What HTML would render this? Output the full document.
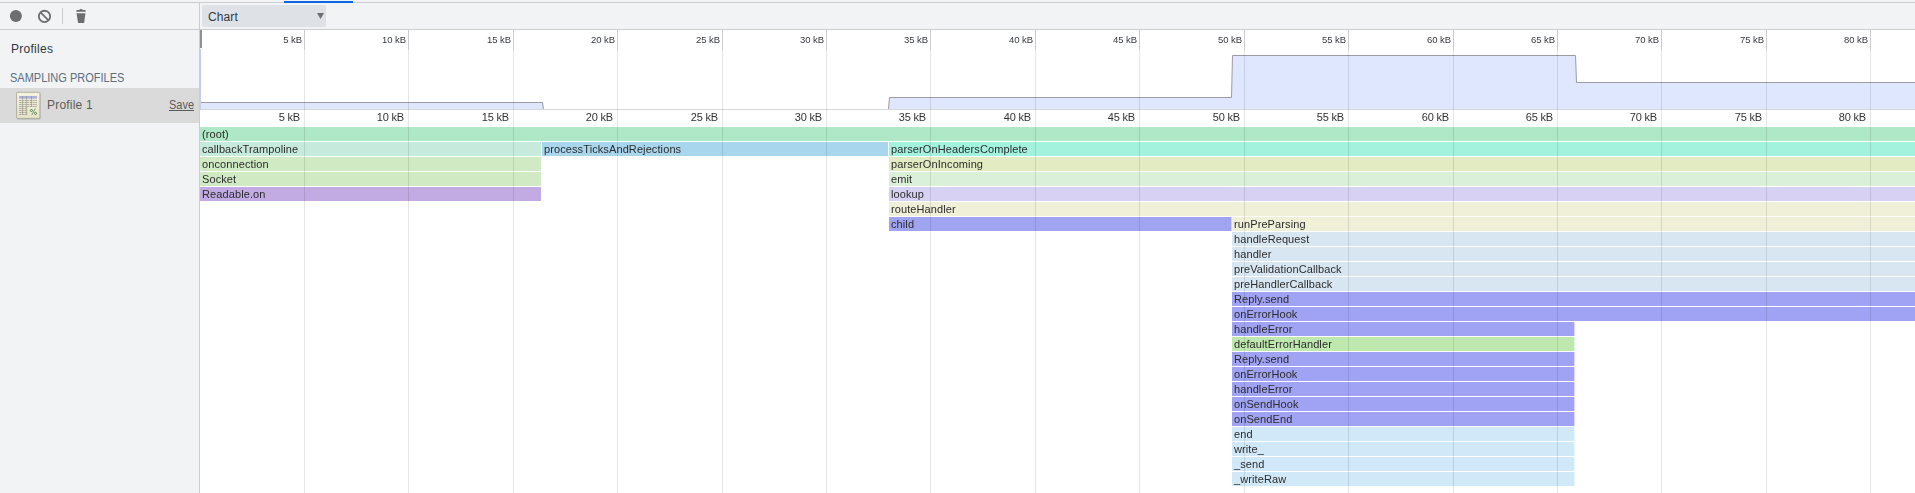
<!DOCTYPE html>
<html><head><meta charset="utf-8"><title>Profile</title>
<style>
html,body{margin:0;padding:0;}
body{width:1915px;height:493px;overflow:hidden;background:#fff;position:relative;font-family:"Liberation Sans",sans-serif;font-size:12px;color:#303942;}
div,span,svg{position:absolute;box-sizing:border-box;}
.side{left:0;top:0;width:199px;height:493px;background:#f1f3f4;}
.sideb{left:199px;top:3px;width:1px;height:490px;background:#cbcdd1;}
.top{left:0;top:0;width:1915px;height:3px;background:#f1f3f4;}
.topl{left:0;top:2px;width:1915px;height:1px;background:#cbcdd1;}
.tab{left:284px;top:1px;width:69px;height:2px;background:#0b66e4;}
.tb{left:0;top:3px;width:1915px;height:26px;background:#f1f3f4;}
.tbl{left:0;top:29px;width:1915px;height:1px;background:#cbcdd1;}
.sel{left:202px;top:5px;width:124px;height:22px;background:#dee1e6;border-radius:2px;}
.t{white-space:nowrap;line-height:14px;}
.bar{height:14px;}
.bl{will-change:transform;font-size:11px;line-height:14px;color:#2c2c2c;white-space:nowrap;top:0;left:2px;letter-spacing:0.1px;}
.g{width:1px;background:rgba(0,0,0,0.1);}
.gd{width:1px;background:rgba(0,0,10,0.2);}
.ol{will-change:transform;font-size:9.5px;line-height:12px;color:#353a40;white-space:nowrap;text-align:right;width:60px;top:34px;letter-spacing:-0.05px;}
.fl{will-change:transform;font-size:11px;line-height:14px;color:#333;white-space:nowrap;text-align:right;width:60px;top:110px;letter-spacing:-0.2px;}
</style></head><body>

<div class="chart" style="left:200px;top:30px;width:1715px;height:463px;background:#fff;"></div>
<svg style="left:200px;top:30px;" width="1715" height="80" viewBox="0 0 1715 80">
<path d="M0 72.5 H342.5 L343.5 80 H688.5 L689.5 67.5 H1031.5 L1032.5 25.5 H1375.5 L1376.5 52.5 H1715 V80 H0 Z" fill="#dee7fe"/>
<path d="M0 72.5 H342.5 L343.5 79.5 M688.5 79.5 L689.5 67.5 H1031.5 L1032.5 25.5 H1375.5 L1376.5 52.5 H1715" fill="none" stroke="#a09aa3" stroke-width="1"/>
</svg>
<div style="left:200px;top:109px;width:1715px;height:1px;background:#d4d6dc;"></div>
<div class="bar" style="left:200px;top:127px;width:1715px;background:#aee8c6;"><span class="bl">(root)</span></div>
<div class="bar" style="left:200px;top:142px;width:341px;background:#c6ebdd;"><span class="bl">callbackTrampoline</span></div>
<div class="bar" style="left:542px;top:142px;width:346px;background:#a8d6ec;"><span class="bl">processTicksAndRejections</span></div>
<div class="bar" style="left:889px;top:142px;width:1026px;background:#a2f2de;"><span class="bl">parserOnHeadersComplete</span></div>
<div class="bar" style="left:200px;top:157px;width:341px;background:#d0eac4;"><span class="bl">onconnection</span></div>
<div class="bar" style="left:889px;top:157px;width:1026px;background:#e3ebc2;"><span class="bl">parserOnIncoming</span></div>
<div class="bar" style="left:200px;top:172px;width:341px;background:#d0eac4;"><span class="bl">Socket</span></div>
<div class="bar" style="left:889px;top:172px;width:1026px;background:#dbf0d8;"><span class="bl">emit</span></div>
<div class="bar" style="left:200px;top:187px;width:341px;background:#c2abe3;"><span class="bl">Readable.on</span></div>
<div class="bar" style="left:889px;top:187px;width:1026px;background:#d7d2f3;"><span class="bl">lookup</span></div>
<div class="bar" style="left:889px;top:202px;width:1026px;background:#f0efd8;"><span class="bl">routeHandler</span></div>
<div class="bar" style="left:889px;top:217px;width:342px;background:#a0a4f0;"><span class="bl">child</span></div>
<div class="bar" style="left:1231px;top:217px;width:1px;background:#a0a4f0;opacity:0.5;"></div>
<div class="bar" style="left:1232px;top:217px;width:683px;background:#f0efd8;"><span class="bl">runPreParsing</span></div>
<div class="bar" style="left:1232px;top:232px;width:683px;background:#d8e6f2;"><span class="bl">handleRequest</span></div>
<div class="bar" style="left:1232px;top:247px;width:683px;background:#d8e6f2;"><span class="bl">handler</span></div>
<div class="bar" style="left:1232px;top:262px;width:683px;background:#d8e6f2;"><span class="bl">preValidationCallback</span></div>
<div class="bar" style="left:1232px;top:277px;width:683px;background:#d8e6f2;"><span class="bl">preHandlerCallback</span></div>
<div class="bar" style="left:1232px;top:292px;width:683px;background:#a0a2f4;"><span class="bl">Reply.send</span></div>
<div class="bar" style="left:1232px;top:307px;width:683px;background:#a0a2f4;"><span class="bl">onErrorHook</span></div>
<div class="bar" style="left:1232px;top:322px;width:342px;background:#a0a2f4;"><span class="bl">handleError</span></div>
<div class="bar" style="left:1574px;top:322px;width:1px;background:#a0a2f4;opacity:0.4;"></div>
<div class="bar" style="left:1232px;top:337px;width:342px;background:#bee8ae;"><span class="bl">defaultErrorHandler</span></div>
<div class="bar" style="left:1574px;top:337px;width:1px;background:#bee8ae;opacity:0.4;"></div>
<div class="bar" style="left:1232px;top:352px;width:342px;background:#a0a2f4;"><span class="bl">Reply.send</span></div>
<div class="bar" style="left:1574px;top:352px;width:1px;background:#a0a2f4;opacity:0.4;"></div>
<div class="bar" style="left:1232px;top:367px;width:342px;background:#a0a2f4;"><span class="bl">onErrorHook</span></div>
<div class="bar" style="left:1574px;top:367px;width:1px;background:#a0a2f4;opacity:0.4;"></div>
<div class="bar" style="left:1232px;top:382px;width:342px;background:#a0a2f4;"><span class="bl">handleError</span></div>
<div class="bar" style="left:1574px;top:382px;width:1px;background:#a0a2f4;opacity:0.4;"></div>
<div class="bar" style="left:1232px;top:397px;width:342px;background:#a0a2f4;"><span class="bl">onSendHook</span></div>
<div class="bar" style="left:1574px;top:397px;width:1px;background:#a0a2f4;opacity:0.4;"></div>
<div class="bar" style="left:1232px;top:412px;width:342px;background:#a0a2f4;"><span class="bl">onSendEnd</span></div>
<div class="bar" style="left:1574px;top:412px;width:1px;background:#a0a2f4;opacity:0.4;"></div>
<div class="bar" style="left:1232px;top:427px;width:342px;background:#d0e8f8;"><span class="bl">end</span></div>
<div class="bar" style="left:1574px;top:427px;width:1px;background:#d0e8f8;opacity:0.4;"></div>
<div class="bar" style="left:1232px;top:442px;width:342px;background:#d0e8f8;"><span class="bl">write_</span></div>
<div class="bar" style="left:1574px;top:442px;width:1px;background:#d0e8f8;opacity:0.4;"></div>
<div class="bar" style="left:1232px;top:457px;width:342px;background:#d0e8f8;"><span class="bl">_send</span></div>
<div class="bar" style="left:1574px;top:457px;width:1px;background:#d0e8f8;opacity:0.4;"></div>
<div class="bar" style="left:1232px;top:472px;width:342px;background:#d0e8f8;"><span class="bl">_writeRaw</span></div>
<div class="bar" style="left:1574px;top:472px;width:1px;background:#d0e8f8;opacity:0.4;"></div>
<div class="gd" style="left:304px;top:30px;height:20px;"></div>
<div class="g" style="left:304px;top:50px;height:443px;"></div>
<span class="ol" style="left:242px;">5 kB</span>
<span class="fl" style="left:240px;">5 kB</span>
<div class="gd" style="left:408px;top:30px;height:20px;"></div>
<div class="g" style="left:408px;top:50px;height:443px;"></div>
<span class="ol" style="left:346px;">10 kB</span>
<span class="fl" style="left:344px;">10 kB</span>
<div class="gd" style="left:513px;top:30px;height:20px;"></div>
<div class="g" style="left:513px;top:50px;height:443px;"></div>
<span class="ol" style="left:451px;">15 kB</span>
<span class="fl" style="left:449px;">15 kB</span>
<div class="gd" style="left:617px;top:30px;height:20px;"></div>
<div class="g" style="left:617px;top:50px;height:443px;"></div>
<span class="ol" style="left:555px;">20 kB</span>
<span class="fl" style="left:553px;">20 kB</span>
<div class="gd" style="left:722px;top:30px;height:20px;"></div>
<div class="g" style="left:722px;top:50px;height:443px;"></div>
<span class="ol" style="left:660px;">25 kB</span>
<span class="fl" style="left:658px;">25 kB</span>
<div class="gd" style="left:826px;top:30px;height:20px;"></div>
<div class="g" style="left:826px;top:50px;height:443px;"></div>
<span class="ol" style="left:764px;">30 kB</span>
<span class="fl" style="left:762px;">30 kB</span>
<div class="gd" style="left:930px;top:30px;height:20px;"></div>
<div class="g" style="left:930px;top:50px;height:443px;"></div>
<span class="ol" style="left:868px;">35 kB</span>
<span class="fl" style="left:866px;">35 kB</span>
<div class="gd" style="left:1035px;top:30px;height:20px;"></div>
<div class="g" style="left:1035px;top:50px;height:443px;"></div>
<span class="ol" style="left:973px;">40 kB</span>
<span class="fl" style="left:971px;">40 kB</span>
<div class="gd" style="left:1139px;top:30px;height:20px;"></div>
<div class="g" style="left:1139px;top:50px;height:443px;"></div>
<span class="ol" style="left:1077px;">45 kB</span>
<span class="fl" style="left:1075px;">45 kB</span>
<div class="gd" style="left:1244px;top:30px;height:20px;"></div>
<div class="g" style="left:1244px;top:50px;height:443px;"></div>
<span class="ol" style="left:1182px;">50 kB</span>
<span class="fl" style="left:1180px;">50 kB</span>
<div class="gd" style="left:1348px;top:30px;height:20px;"></div>
<div class="g" style="left:1348px;top:50px;height:443px;"></div>
<span class="ol" style="left:1286px;">55 kB</span>
<span class="fl" style="left:1284px;">55 kB</span>
<div class="gd" style="left:1453px;top:30px;height:20px;"></div>
<div class="g" style="left:1453px;top:50px;height:443px;"></div>
<span class="ol" style="left:1391px;">60 kB</span>
<span class="fl" style="left:1389px;">60 kB</span>
<div class="gd" style="left:1557px;top:30px;height:20px;"></div>
<div class="g" style="left:1557px;top:50px;height:443px;"></div>
<span class="ol" style="left:1495px;">65 kB</span>
<span class="fl" style="left:1493px;">65 kB</span>
<div class="gd" style="left:1661px;top:30px;height:20px;"></div>
<div class="g" style="left:1661px;top:50px;height:443px;"></div>
<span class="ol" style="left:1599px;">70 kB</span>
<span class="fl" style="left:1597px;">70 kB</span>
<div class="gd" style="left:1766px;top:30px;height:20px;"></div>
<div class="g" style="left:1766px;top:50px;height:443px;"></div>
<span class="ol" style="left:1704px;">75 kB</span>
<span class="fl" style="left:1702px;">75 kB</span>
<div class="gd" style="left:1870px;top:30px;height:20px;"></div>
<div class="g" style="left:1870px;top:50px;height:443px;"></div>
<span class="ol" style="left:1808px;">80 kB</span>
<span class="fl" style="left:1806px;">80 kB</span>
<div style="left:200px;top:30px;width:2px;height:18px;background:#909090;"></div>
<div style="left:200px;top:49px;width:1px;height:61px;background:#c4cdec;"></div>
<div class="side"></div><div class="tb"></div><div class="top"></div><div class="topl"></div><div class="tab"></div><div class="tbl"></div><div class="sideb"></div>
<div class="sel"></div>
<span class="t" style="left:208px;top:10px;font-size:12px;color:#303942;letter-spacing:0.1px;">Chart</span>
<svg style="left:317px;top:13px;" width="7" height="6" viewBox="0 0 7 6"><path d="M0 0 H7 L3.5 6 Z" fill="#6e6e6e"/></svg>
<svg style="left:0;top:3px;" width="100" height="26" viewBox="0 0 100 26">
<circle cx="15.9" cy="12.9" r="6" fill="#6e6e6e"/>
<circle cx="44.5" cy="13.4" r="5.65" fill="none" stroke="#6e6e6e" stroke-width="1.8"/>
<path d="M40.5 9.4 L48.5 17.4" stroke="#6e6e6e" stroke-width="1.8"/>
<rect x="62" y="5" width="1" height="16" fill="#cbcdd1"/>
<path d="M76.3 8.7 V7.9 Q76.3 7.1 77.1 7.1 H79.2 Q79.6 6.05 81 6.05 Q82.5 6.05 82.85 7.1 H84.95 Q85.75 7.1 85.75 7.9 V8.7 Z M76.5 10.3 H85.5 L84.1 19.9 H78.1 Z" fill="#6e6e6e"/>
</svg>
<span class="t" style="left:11px;top:42px;font-size:12px;color:#303942;letter-spacing:0.27px;">Profiles</span>
<span class="t" style="left:10px;top:71px;font-size:12px;transform:scaleX(0.917);transform-origin:0 0;color:#5c6e81;">SAMPLING PROFILES</span>
<div style="left:0;top:88px;width:199px;height:35px;background:#dadada;"></div>
<span class="t" style="left:47px;top:98px;font-size:12px;letter-spacing:0.2px;color:#5a5a5a;">Profile 1</span>
<span class="t" style="left:169px;top:98px;font-size:12px;transform:scaleX(0.915);transform-origin:0 0;color:#5a5a5a;text-decoration:underline;">Save</span>
<svg style="left:14px;top:90px;" width="30" height="32" viewBox="0 0 30 32">
<defs><linearGradient id="pg" x1="0" y1="0" x2="0" y2="1"><stop offset="0" stop-color="#f6f4e0"/><stop offset="1" stop-color="#e6e4c6"/></linearGradient></defs>
<rect x="3" y="3.2" width="23.4" height="26.4" rx="1" fill="rgba(0,0,0,0.18)"/>
<rect x="2.6" y="2.3" width="23.3" height="26.1" rx="0.8" fill="url(#pg)" stroke="#a3a293" stroke-width="0.8"/>
<rect x="5" y="6" width="18" height="2.7" fill="#b0b4dc"/>
<g stroke="#7c7c76" stroke-width="0.7" opacity="0.85">
<path d="M5 10.4H23M5 12.4H23M5 14.4H23M5 16.4H23M5 18.4H13.5M5 20.4H13.5M5 22.4H13.5M5 24.4H13.5" stroke-dasharray="2.2 0.5"/>
<path d="M8.4 6V25M12.4 6V25M17.5 6V16.5" stroke-width="0.55"/>
</g>
<g fill="none" stroke="#3f7d4f" stroke-width="0.85"><circle cx="17.4" cy="20.5" r="1.05"/><circle cx="21.5" cy="23.4" r="1.05"/><path d="M21.3 18.5 L17.8 25.1" stroke-width="0.7"/></g>
</svg>
</body></html>
